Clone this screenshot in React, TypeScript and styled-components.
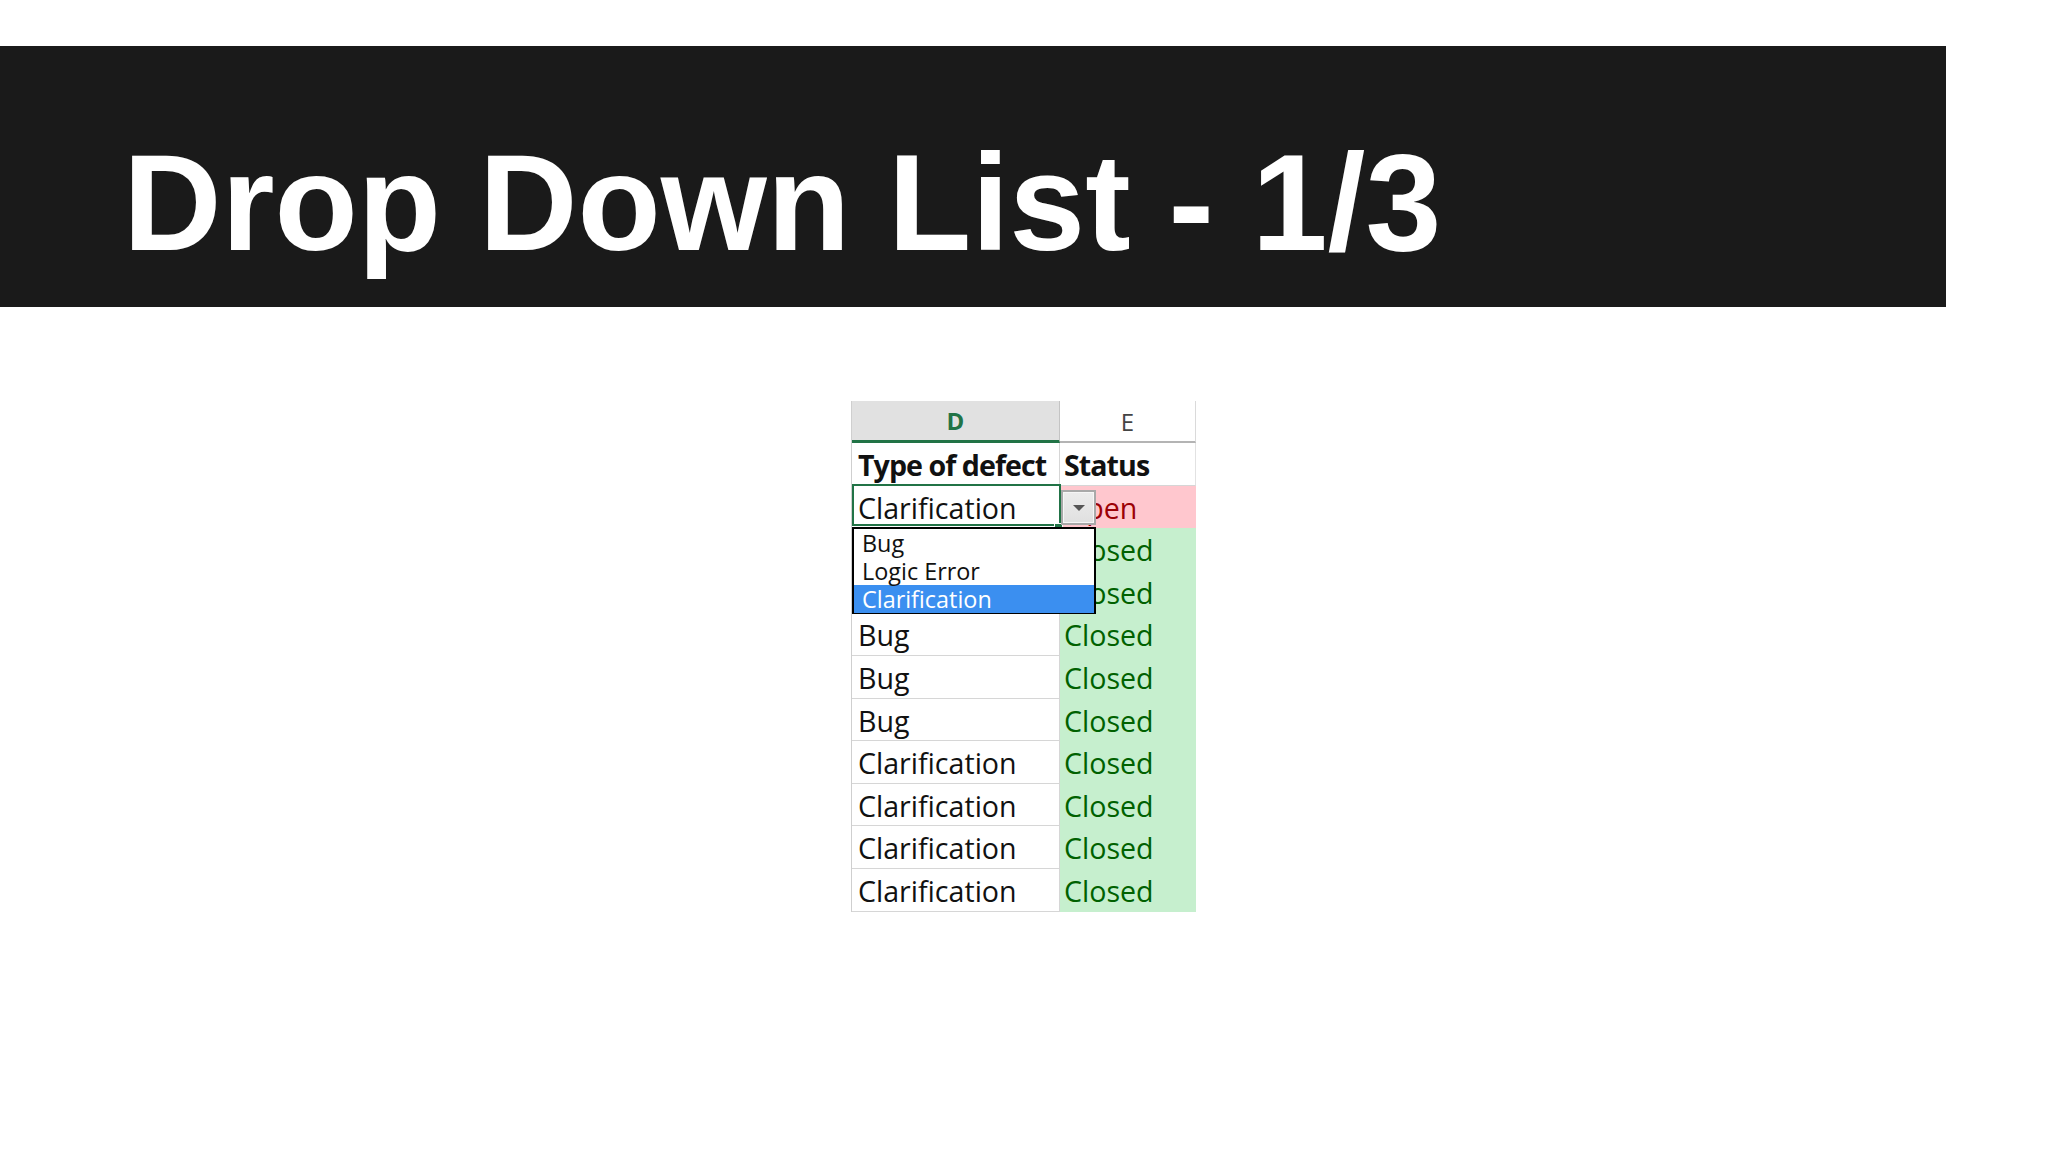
import React from 'react';
import styled, { createGlobalStyle } from 'styled-components';

const GlobalStyle = createGlobalStyle`
  html, body { margin: 0; padding: 0; background: #ffffff; }
  body {
    width: 2048px;
    height: 1152px;
    overflow: hidden;
    font-family: "Open Sans", "Noto Sans", sans-serif;
  }
`;

const Page = styled.div`
  width: 2048px;
  height: 1152px;
  background: #ffffff;
  padding-top: 46px;
  box-sizing: border-box;
  display: flex;
  flex-direction: column;
`;

const Banner = styled.header`
  width: 1946px;
  height: 261px;
  background: #1a1a1a;
  box-sizing: border-box;
  padding: 89px 0 0 123px;
`;

const Title = styled.h1`
  margin: 0;
  font-family: "Liberation Sans", Arial, sans-serif;
  font-weight: 700;
  font-size: 136.4px;
  line-height: 1;
  color: #ffffff;
  white-space: nowrap;
`;

const Sheet = styled.div`
  margin: 94px 0 0 851px;
  width: 345px;
  box-sizing: border-box;
  border-left: 1px solid #cfcfcf;
  display: grid;
  grid-template-columns: 208px 136px;
  grid-auto-rows: 42.6px;
  grid-template-rows: 42px;
`;

const ColHeader = styled.div<{ $active?: boolean }>`
  box-sizing: border-box;
  display: flex;
  align-items: center;
  justify-content: center;
  font-family: "Open Sans", sans-serif;
  font-size: 24px;
  line-height: 1;
  padding-top: 1px;
  background: ${(p) => (p.$active ? '#e1e1e1' : '#ffffff')};
  color: ${(p) => (p.$active ? '#217346' : '#444444')};
  font-weight: ${(p) => (p.$active ? 700 : 400)};
  border-bottom: ${(p) => (p.$active ? '3px solid #217346' : '2px solid #b4b4b4')};
  border-right: 1px solid ${(p) => (p.$active ? '#c4c4c4' : '#dadada')};
`;

type Tone = 'plain' | 'open' | 'closed';

const toneBg: Record<Tone, string> = {
  plain: '#ffffff',
  open: '#ffc7ce',
  closed: '#c6efce',
};
const toneFg: Record<Tone, string> = {
  plain: '#111111',
  open: '#9c0006',
  closed: '#006100',
};

const Cell = styled.div<{ $tone?: Tone; $bold?: boolean; $col: 'D' | 'E' }>`
  position: relative;
  box-sizing: border-box;
  display: flex;
  align-items: flex-end;
  padding: 0 0 5px ${(p) => (p.$col === 'D' ? '6px' : '4px')};
  font-family: "Open Sans", sans-serif;
  font-size: 28.6px;
  line-height: 1;
  white-space: nowrap;
  font-weight: ${(p) => (p.$bold ? 700 : 400)};
  letter-spacing: ${(p) => (p.$bold ? '-0.95px' : '0')};
  background: ${(p) => toneBg[p.$tone ?? 'plain']};
  color: ${(p) => toneFg[p.$tone ?? 'plain']};
  border-bottom: 1px solid
    ${(p) => (p.$col === 'D' || (p.$tone ?? 'plain') === 'plain' ? '#d6d6d6' : toneBg[p.$tone ?? 'plain'])};
  border-right: 1px solid
    ${(p) => (p.$col === 'D' ? '#d6d6d6' : (p.$tone ?? 'plain') === 'plain' ? '#e2e2e2' : toneBg[p.$tone ?? 'plain'])};
`;

const ActiveCell = styled(Cell)`
  z-index: 3;
`;

const ActiveFrame = styled.div`
  position: absolute;
  left: 0;
  top: -2px;
  width: 209px;
  height: 42px;
  box-sizing: border-box;
  border: 2px solid #217346;
  pointer-events: none;
`;

const FillHandle = styled.div`
  position: absolute;
  left: 202px;
  top: 37px;
  width: 9px;
  height: 8px;
  box-sizing: border-box;
  background: #217346;
  border: 1px solid #ffffff;
`;

const DropButton = styled.div`
  position: absolute;
  left: 209px;
  top: 4px;
  width: 35px;
  height: 35px;
  box-sizing: border-box;
  border: 2px solid #a9a9a9;
  background: linear-gradient(#ececec, #e0e0e0);
  box-shadow: inset 0 0 0 1px #f6f6f6;
  display: flex;
  align-items: center;
  justify-content: center;
`;

const Caret = styled.span`
  width: 0;
  height: 0;
  border-left: 6px solid transparent;
  border-right: 6px solid transparent;
  border-top: 6px solid #555555;
  margin-top: 1px;
`;

const List = styled.ul`
  position: absolute;
  left: 0;
  top: 41px;
  width: 244px;
  height: 87px;
  box-sizing: border-box;
  margin: 0;
  padding: 0;
  list-style: none;
  border: 2px solid #000000;
  background: #ffffff;
`;

const Item = styled.li<{ $selected?: boolean }>`
  height: 28px;
  box-sizing: border-box;
  padding: 1px 0 0 8px;
  font-family: "Open Sans", sans-serif;
  font-size: 23.4px;
  line-height: 27px;
  white-space: nowrap;
  color: ${(p) => (p.$selected ? '#ffffff' : '#111111')};
  background: ${(p) => (p.$selected ? '#3b8ff0' : 'transparent')};
`;

const rows: { type: string; status: string; tone: Tone }[] = [
  { type: 'Bug', status: 'Closed', tone: 'closed' },
  { type: 'Bug', status: 'Closed', tone: 'closed' },
  { type: 'Bug', status: 'Closed', tone: 'closed' },
  { type: 'Bug', status: 'Closed', tone: 'closed' },
  { type: 'Bug', status: 'Closed', tone: 'closed' },
  { type: 'Clarification', status: 'Closed', tone: 'closed' },
  { type: 'Clarification', status: 'Closed', tone: 'closed' },
  { type: 'Clarification', status: 'Closed', tone: 'closed' },
  { type: 'Clarification', status: 'Closed', tone: 'closed' },
];

export default function App() {
  return (
    <>
      <GlobalStyle />
      <Page>
        <Banner>
          <Title>Drop Down List - 1/3</Title>
        </Banner>
        <Sheet>
          <ColHeader $active>D</ColHeader>
          <ColHeader>E</ColHeader>

          <Cell $col="D" $bold>Type of defect</Cell>
          <Cell $col="E" $bold>Status</Cell>

          <ActiveCell $col="D">
            Clarification
            <ActiveFrame />
            <FillHandle />
            <DropButton>
              <Caret />
            </DropButton>
            <List>
              <Item>Bug</Item>
              <Item>Logic Error</Item>
              <Item $selected>Clarification</Item>
            </List>
          </ActiveCell>
          <Cell $col="E" $tone="open">Open</Cell>

          {rows.map((r, i) => (
            <React.Fragment key={i}>
              <Cell $col="D">{r.type}</Cell>
              <Cell $col="E" $tone={r.tone}>{r.status}</Cell>
            </React.Fragment>
          ))}
        </Sheet>
      </Page>
    </>
  );
}
